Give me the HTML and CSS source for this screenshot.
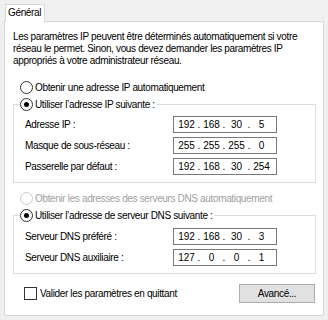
FILE: index.html
```html
<!DOCTYPE html>
<html lang="fr">
<head>
    <meta charset="UTF-8">
    <title>Propriétés de : Protocole Internet version 4 (TCP/IPv4)</title>
    <link rel="stylesheet" href="styles.css">
</head>
<body>
    <div class="dialog">
        <div class="tabs">
            <div class="tab">Général</div>
        </div>

        <div class="panel">
            <p class="intro">
                Les paramètres IP peuvent être déterminés automatiquement si votre<br>
                réseau le permet. Sinon, vous devez demander les paramètres IP<br>
                appropriés à votre administrateur réseau.
            </p>

            <label class="radio first">
                <span class="dot"></span>Obtenir une adresse IP automatiquement
            </label>

            <fieldset class="group">
                <legend>
                    <label class="radio">
                        <span class="dot checked"></span>Utiliser l’adresse IP suivante :
                    </label>
                </legend>
                <div class="fields">
                    <span>Adresse IP :</span>
                    <div class="ip"><span>192</span><i>.</i><span>168</span><i>.</i><span>30</span><i>.</i><span>5</span></div>
                    <span>Masque de sous-réseau :</span>
                    <div class="ip"><span>255</span><i>.</i><span>255</span><i>.</i><span>255</span><i>.</i><span>0</span></div>
                    <span>Passerelle par défaut :</span>
                    <div class="ip"><span>192</span><i>.</i><span>168</span><i>.</i><span>30</span><i>.</i><span>254</span></div>
                </div>
            </fieldset>

            <label class="radio disabled second">
                <span class="dot"></span>Obtenir les adresses des serveurs DNS automatiquement
            </label>

            <fieldset class="group dns">
                <legend>
                    <label class="radio">
                        <span class="dot checked"></span>Utiliser l’adresse de serveur DNS suivante :
                    </label>
                </legend>
                <div class="fields">
                    <span>Serveur DNS préféré :</span>
                    <div class="ip"><span>192</span><i>.</i><span>168</span><i>.</i><span>30</span><i>.</i><span>3</span></div>
                    <span>Serveur DNS auxiliaire :</span>
                    <div class="ip"><span>127</span><i>.</i><span>0</span><i>.</i><span>0</span><i>.</i><span>1</span></div>
                </div>
            </fieldset>

            <div class="footer">
                <label class="check"><span class="box"></span>Valider les paramètres en quittant</label>
                <button class="btn">Avancé...</button>
            </div>
        </div>
    </div>
</body>
</html>
```

FILE: styles.css
```css
body {
    margin: 0;
    padding: 0;
    background-color: #f0f0f0;
    font-family: "Liberation Sans", Arial, sans-serif;
    font-size: 10px;
    letter-spacing: -0.35px;
    color: #000;
}
.dialog {
    padding: 4px 0 0 4px;
}
.tabs {
    display: flex;
    height: 17px;
    padding-left: 1px;
}
.tab {
    background-color: #fff;
    border: 1px solid #d9d9d9;
    border-bottom: none;
    padding: 0 3px 0 2px;
    line-height: 16px;
    margin-bottom: -1px;
    position: relative;
    z-index: 1;
}
.panel {
    width: 318px;
    height: 293px;
    background-color: #fff;
    border: 1px solid #d9d9d9;
}
.intro {
    margin: 9px 0 0 8px;
    line-height: 12px;
    white-space: nowrap;
}
.radio {
    display: flex;
    align-items: center;
    height: 13px;
    white-space: nowrap;
}
.radio.first {
    margin: 14px 0 0 15px;
}
.radio.second {
    margin: 9px 0 0 15px;
}
.dot {
    width: 11px;
    height: 11px;
    border: 1px solid #333;
    border-radius: 50%;
    margin-right: 2px;
    display: flex;
    align-items: center;
    justify-content: center;
    background-color: #fff;
}
.dot.checked::after {
    content: "";
    width: 5px;
    height: 5px;
    border-radius: 50%;
    background-color: #000;
}
.disabled {
    color: #a0a0a0;
}
.disabled .dot {
    border-color: #cccccc;
}
.group {
    margin: 4px 0 0 8px;
    width: 295px;
    border: 1px solid #dcdcdc;
    padding: 5px 0 7px 6px;
}
.group legend {
    padding: 0 2px 0 0;
}
.group.dns {
    margin-top: 4px;
    padding-top: 6px;
    padding-bottom: 7px;
}
.fields {
    display: grid;
    grid-template-columns: 148px 104px;
    row-gap: 4px;
    align-items: center;
    padding-left: 5px;
}
.ip {
    display: flex;
    height: 15px;
    border: 1px solid #7a7a7a;
    padding: 0 3px 0 2px;
    line-height: 15px;
    letter-spacing: 0;
}
.ip span {
    width: 21px;
    text-align: center;
}
.ip i {
    font-style: normal;
    width: 4px;
    text-align: center;
}
.footer {
    display: flex;
    justify-content: space-between;
    align-items: center;
    margin: 10px 0 0 19px;
    width: 291px;
}
.check {
    display: flex;
    align-items: center;
}
.box {
    width: 11px;
    height: 11px;
    border: 1px solid #333;
    margin-right: 3px;
}
.btn {
    width: 76px;
    height: 19px;
    border: 1px solid #adadad;
    background-color: #e1e1e1;
    font-family: inherit;
    font-size: 10px;
    letter-spacing: -0.35px;
    padding: 0;
}
```
